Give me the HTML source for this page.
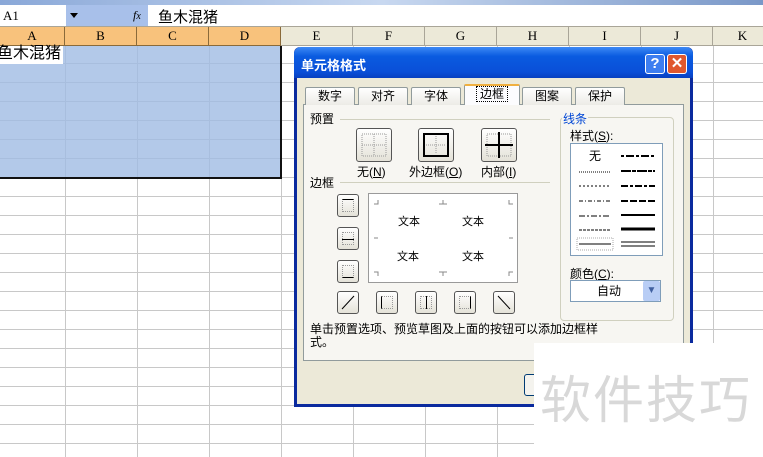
<!DOCTYPE html>
<html><head><meta charset="utf-8"><style>
*{margin:0;padding:0;box-sizing:border-box}
body{width:763px;height:457px;overflow:hidden;position:relative;background:#fff;font-family:"Liberation Sans","Noto Sans CJK SC",sans-serif;font-size:12px;color:#000}
.a{position:absolute}
.grid{left:0;top:45px;width:763px;height:412px;background:
repeating-linear-gradient(to bottom,transparent 0 18px,#c8c8c8 18px 19px),#fff}
.vl{position:absolute;top:45px;width:1px;height:412px;background:#c8c8c8}
.hd{position:absolute;top:27px;height:19px;border-right:1px solid #a9a598;border-bottom:1px solid #a9a598;text-align:center;font-family:"Liberation Serif",serif;font-size:13px;line-height:18px;background:#ece9d8}
.hd.s{background:#f8c27c;border-color:#8a6a3a}
.tab{position:absolute;top:87px;height:18px;border:1px solid #919b9c;border-bottom:none;background:linear-gradient(#fff,#ecebe6);text-align:center;line-height:17px;font-size:12px;border-radius:2px 2px 0 0}
.pb{position:absolute;width:36px;height:34px;border:1px solid #555;border-radius:3px;background:linear-gradient(#fff,#e4e2d8)}
.sb{position:absolute;width:22px;height:23px;border:1px solid #555;border-radius:3px;background:linear-gradient(#fff,#e4e2d8)}
.sb i{position:absolute;left:4px;top:4px;width:12px;height:13px;border:1px dotted #999}
.t{position:absolute;font-size:11px}
</style></head><body>
<div class="a" style="left:0;top:0;width:763px;height:5px;background:linear-gradient(90deg,#8aa8d8,#c8d8f0 50%,#7a98c8)"></div>
<div class="a" style="left:0;top:5px;width:763px;height:22px;background:#fff;border-bottom:1px solid #a9a598"></div>
<div class="a" style="left:3px;top:8px;font-family:'Liberation Serif',serif;font-size:13px">A1</div>
<div class="a" style="left:66px;top:5px;width:82px;height:21px;background:#a8c0ea"></div>
<div class="a" style="left:70px;top:13px;border:4px solid transparent;border-top:5px solid #000"></div>
<div class="a" style="left:133px;top:8px;font-family:'Liberation Serif',serif;font-style:italic;font-size:12px">f<small>x</small></div>
<div class="a" style="left:158px;top:6px;font-size:15px">鱼木混猪</div>
<div class="a grid"></div>
<div class="vl" style="left:65px"></div><div class="vl" style="left:137px"></div><div class="vl" style="left:209px"></div><div class="vl" style="left:281px"></div><div class="vl" style="left:353px"></div><div class="vl" style="left:425px"></div><div class="vl" style="left:497px"></div><div class="vl" style="left:569px"></div><div class="vl" style="left:641px"></div><div class="vl" style="left:713px"></div>
<div class="hd s" style="left:0;width:65px">A</div>
<div class="hd s" style="left:65px;width:72px">B</div>
<div class="hd s" style="left:137px;width:72px">C</div>
<div class="hd s" style="left:209px;width:72px">D</div>
<div class="hd" style="left:281px;width:72px">E</div>
<div class="hd" style="left:353px;width:72px">F</div>
<div class="hd" style="left:425px;width:72px">G</div>
<div class="hd" style="left:497px;width:72px">H</div>
<div class="hd" style="left:569px;width:72px">I</div>
<div class="hd" style="left:641px;width:72px">J</div>
<div class="hd" style="left:713px;width:60px">K</div>
<div class="a" style="left:0;top:46px;width:282px;height:133px;background:rgba(160,188,228,.8);border-right:2px solid #111;border-bottom:2px solid #111"></div>
<div class="a" style="left:0;top:46px;width:63px;height:18px;background:#fff"></div>
<div class="a" style="left:-3px;top:45px;font-size:16px;line-height:18px">鱼木混猪</div>

<div class="a" style="left:294px;top:47px;width:399px;height:360px;background:#ece9d8;border:3px solid #0a2a9e;border-top:none;border-radius:6px 6px 0 0"></div>
<div class="a" style="left:294px;top:47px;width:399px;height:31px;background:linear-gradient(#3d8af5,#0a5be0 30%,#0a4fd8 80%,#0840c0);border-radius:7px 7px 0 0"></div>
<div class="a" style="left:301px;top:55px;color:#fff;font-weight:bold;font-size:13px">单元格格式</div>
<div class="a" style="left:645px;top:54px;width:20px;height:20px;border:1px solid #fff;border-radius:3px;background:#3d7ef0;color:#fff;font-weight:bold;text-align:center;font-size:15px;line-height:18px">?</div>
<div class="a" style="left:667px;top:54px;width:20px;height:20px;border:1px solid #fff;border-radius:3px;background:#e0582e;color:#fff;font-weight:bold;text-align:center;font-size:15px;line-height:18px">✕</div>
<div class="a" style="left:303px;top:104px;width:381px;height:257px;background:#f7f6f2;border:1px solid #919b9c"></div>
<div class="tab" style="left:305px;width:50px">数字</div>
<div class="tab" style="left:358px;width:50px">对齐</div>
<div class="tab" style="left:411px;width:50px">字体</div>
<div class="tab" style="left:464px;width:56px;top:84px;height:21px;background:#fcfcfe;border-top:2px solid #f0b040"><span style="border:1px dotted #000;padding:0 3px">边框</span></div>
<div class="tab" style="left:522px;width:50px">图案</div>
<div class="tab" style="left:575px;width:50px">保护</div>

<div class="a" style="left:310px;top:110px">预置</div>
<div class="a" style="left:340px;top:119px;width:210px;height:1px;background:#d0d0bf"></div>
<div class="pb" style="left:356px;top:128px"><svg width="34" height="32"><rect x="5" y="5" width="24" height="22" fill="none" stroke="#999" stroke-dasharray="1 1"/><path d="M17 5V27M5 16H29" stroke="#999" stroke-dasharray="1 1"/></svg></div>
<div class="pb" style="left:418px;top:128px"><svg width="34" height="32"><rect x="5" y="5" width="24" height="22" fill="none" stroke="#000" stroke-width="2"/><path d="M17 7V25M7 16H27" stroke="#999" stroke-dasharray="1 1"/></svg></div>
<div class="pb" style="left:481px;top:128px"><svg width="34" height="32"><rect x="5" y="5" width="24" height="22" fill="none" stroke="#999" stroke-dasharray="1 1"/><path d="M17 3V29M3 16H31" stroke="#000" stroke-width="2"/></svg></div>
<div class="a" style="left:357px;top:163px">无(<u>N</u>)</div>
<div class="a" style="left:409px;top:163px">外边框(<u>O</u>)</div>
<div class="a" style="left:481px;top:163px">内部(<u>I</u>)</div>
<div class="a" style="left:310px;top:174px">边框</div>
<div class="a" style="left:340px;top:182px;width:210px;height:1px;background:#d0d0bf"></div>

<div class="sb" style="left:337px;top:194px"><i style="border-top:1px solid #000"></i></div>
<div class="sb" style="left:337px;top:227px"><i></i><b class="a" style="left:4px;top:11px;width:12px;height:1px;background:#000"></b></div>
<div class="sb" style="left:337px;top:260px"><i style="border-bottom:1px solid #000"></i></div>
<div class="sb" style="left:337px;top:291px"><svg width="20" height="21"><path d="M4 17L16 4" stroke="#000"/></svg></div>
<div class="sb" style="left:376px;top:291px"><i style="border-left:1px solid #000"></i></div>
<div class="sb" style="left:415px;top:291px"><i></i><b class="a" style="left:10px;top:4px;width:1px;height:13px;background:#000"></b></div>
<div class="sb" style="left:454px;top:291px"><i style="border-right:1px solid #000"></i></div>
<div class="sb" style="left:493px;top:291px"><svg width="20" height="21"><path d="M4 4L16 17" stroke="#000"/></svg></div>

<div class="a" style="left:368px;top:193px;width:150px;height:90px;background:#fff;border:1px solid #9a9a9a">
<svg width="148" height="88" style="position:absolute;left:0;top:0" stroke="#888" fill="none"><path d="M9 6V10H5M74 6V10M74 10H70M78 10H74M140 6V10H144M5 44H9M144 44H140M9 82V78H5M74 82V78M70 78H78M140 82V78H144"/></svg>
<span class="t" style="left:29px;top:19px">文本</span><span class="t" style="left:93px;top:19px">文本</span>
<span class="t" style="left:28px;top:54px">文本</span><span class="t" style="left:93px;top:54px">文本</span></div>

<div class="a" style="left:560px;top:117px;width:114px;height:204px;border:1px solid #d0d0bf;border-radius:4px"></div>
<div class="a" style="left:562px;top:110px;background:#f7f6f2;color:#0046d5;padding:0 1px">线条</div>
<div class="a" style="left:570px;top:127px">样式(<u>S</u>):</div>
<div class="a" style="left:570px;top:143px;width:93px;height:113px;background:#fff;border:1px solid #7f9db9">
<div class="a" style="left:18px;top:3px">无</div>
<svg width="91" height="111" style="position:absolute;left:0;top:0" stroke="#000">
<path d="M8 28H40" stroke-dasharray="1 1"/><path d="M8 42H40" stroke-dasharray="2 2"/><path d="M8 57H40" stroke-dasharray="4 2 1 2"/><path d="M8 72H40" stroke-dasharray="6 2 2 2"/><path d="M8 86H40" stroke-dasharray="3 1"/><path d="M8 100H40"/><rect x="6" y="94" width="36" height="12" stroke="#aaa" fill="none" stroke-dasharray="1 1"/>
<path d="M50 12H84" stroke-width="2" stroke-dasharray="3 2 8 2"/><path d="M50 27H84" stroke-width="2" stroke-dasharray="10 1 4 1"/><path d="M50 42H84" stroke-width="2" stroke-dasharray="7 2 3 2"/><path d="M50 57H84" stroke-width="2" stroke-dasharray="7 2"/><path d="M50 71H84" stroke-width="2"/><path d="M50 85H84" stroke-width="3"/><path d="M50 98H84M50 102H84"/></svg></div>
<div class="a" style="left:570px;top:265px">颜色(<u>C</u>):</div>
<div class="a" style="left:570px;top:280px;width:91px;height:22px;background:#fff;border:1px solid #7f9db9;line-height:20px;padding-left:26px">自动</div>
<div class="a" style="left:643px;top:281px;width:17px;height:20px;background:#b8cdf5;border-radius:2px;color:#4060a0;text-align:center;font-size:10px;line-height:20px">▼</div>
<div class="a" style="left:310px;top:323px;font-size:12px;line-height:13px;width:300px">单击预置选项、预览草图及上面的按钮可以添加边框样<br>式。</div>
<div class="a" style="left:524px;top:374px;width:30px;height:22px;border:1px solid #003c74;border-radius:3px;background:#f4f3ee"></div>
<div class="a" style="left:534px;top:343px;width:229px;height:114px;background:#fff"></div>
<div class="a" style="left:540px;top:366px;font-size:51px;color:#d8d8d8;letter-spacing:2px;line-height:70px">软件技巧</div>
</body></html>
